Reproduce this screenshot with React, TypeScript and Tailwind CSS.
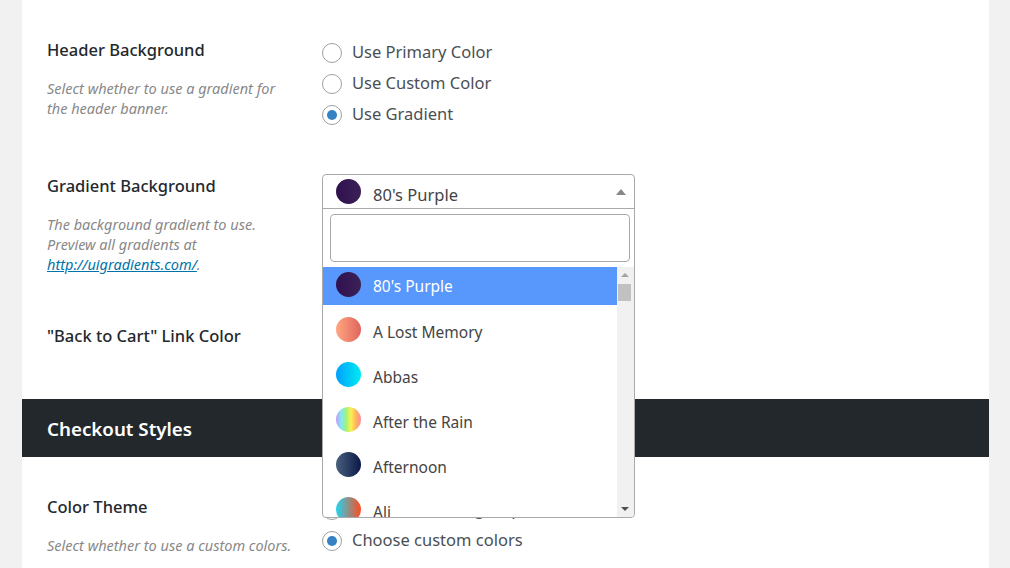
const font = "font-['Noto_Sans','Open_Sans',sans-serif]";

const gradients = [
  { name: "80's Purple", from: "#30114f", to: "#3b2056" },
  { name: "A Lost Memory", from: "#ffa781", to: "#e0645c" },
  { name: "Abbas", from: "#00a1ff", to: "#00ebf0" },
  { name: "After the Rain", from: "", to: "" },
  { name: "Afternoon", from: "#4a607c", to: "#0a1848" },
  { name: "Ali", from: "#22d4f0", to: "#ff4b1f" },
];

function Swatch({ item }: { item: (typeof gradients)[number] }) {
  if (item.name === "After the Rain") {
    return (
      <span className="h-[25px] w-[25px] shrink-0 rounded-full bg-[linear-gradient(to_right,#c09cf5,#7fe7fb,#9ff27e,#fdf04f,#ffb35c,#ff8a9e)]" />
    );
  }
  return (
    <span
      className="h-[25px] w-[25px] shrink-0 rounded-full"
      style={{ backgroundImage: `linear-gradient(to right, ${item.from}, ${item.to})` }}
    />
  );
}

function Radio({ label, checked }: { label: string; checked?: boolean }) {
  return (
    <label className="flex h-[31px] items-center gap-[10px] text-[16.5px] text-[#4a4f55]">
      <span className="flex h-5 w-5 items-center justify-center rounded-full border border-[#a0a0a0] bg-white">
        {checked && <span className="h-[10px] w-[10px] rounded-full bg-[#3582c4]" />}
      </span>
      {label}
    </label>
  );
}

function Row({
  title,
  hint,
  className,
  children,
}: {
  title: string;
  hint?: React.ReactNode;
  className?: string;
  children?: React.ReactNode;
}) {
  return (
    <div className={`flex px-[25px] ${className ?? ""}`}>
      <div className="w-[275px] shrink-0">
        <h3 className="pt-[1px] text-[16.5px] leading-[24px] font-medium text-[#23282d]">{title}</h3>
        {hint && (
          <p className="mt-[16px] w-[265px] text-[14.5px] leading-[20px] text-[#888] italic">{hint}</p>
        )}
      </div>
      <div>{children}</div>
    </div>
  );
}

function GradientDropdown() {
  return (
    <div className="absolute top-[174px] left-[322px] z-10 w-[313px] rounded-[4px] border border-[#aaa] bg-white">
      <div className="flex h-[34px] items-center border-b border-[#aaa] pl-[13px] text-[16.5px] text-[#444]">
        <Swatch item={gradients[0]} />
        <span className="ml-[12px] pt-[7px]">80's Purple</span>
        <span className="mt-[1px] mr-[8px] ml-auto h-0 w-0 border-x-[5px] border-b-[6px] border-x-transparent border-b-[#888]" />
      </div>
      <div className="py-[5px] pr-[4px] pl-[7px]">
        <div className="h-[48px] rounded-[4px] border border-[#aaa]" />
      </div>
      <div className="flex h-[250px] overflow-hidden rounded-b-[4px]">
        <ul className="min-w-0 flex-1 overflow-hidden text-[15.5px] text-[#444]">
          {gradients.map((item, i) => (
            <li
              key={item.name}
              className={`flex items-center pl-[13px] ${
                i === 0 ? "h-[38px] bg-[#5897fb] pb-[3px] text-white" : "h-[45px] pt-[4px]"
              }`}
            >
              <Swatch item={item} />
              <span className={`ml-[12px] ${i === 0 ? "pt-[5px]" : "pt-[7px]"}`}>{item.name}</span>
            </li>
          ))}
        </ul>
        <div className="relative w-[17px] shrink-0 bg-[#f1f1f1]">
          <span className="absolute top-[6px] left-[4px] h-0 w-0 border-x-[4px] border-b-[4px] border-x-transparent border-b-[#a3a3a3]" />
          <span className="absolute top-[17px] left-[1px] h-[17px] w-[13px] bg-[#c1c1c1]" />
          <span className="absolute bottom-[6px] left-[4px] h-0 w-0 border-x-[4px] border-t-[4px] border-x-transparent border-t-[#505050]" />
        </div>
      </div>
    </div>
  );
}

export default function App() {
  return (
    <div className={`h-[568px] overflow-hidden bg-[#f1f1f1] px-[21px] pl-[22px] ${font}`}>
      <div className="relative h-full bg-white">
        <div className="pt-[37px]">
          <Row
            title="Header Background"
            hint={
              <>
                Select whether to use a gradient for
                <br />
                the header banner.
              </>
            }
            className="h-[136px]"
          >
            <Radio label="Use Primary Color" />
            <Radio label="Use Custom Color" />
            <Radio label="Use Gradient" checked />
          </Row>
          <Row
            title="Gradient Background"
            hint={
              <>
                The background gradient to use.
                <br />
                Preview all gradients at
                <br />
                <a className="text-[#0073aa] underline">http://uigradients.com/</a>.
              </>
            }
            className="h-[150px]"
          />
          <Row title={'"Back to Cart" Link Color'} className="h-[76px]" />
        </div>
        <div className="flex h-[58px] items-center bg-[#23282d] px-[25px] pt-[2px] text-[18.75px] font-semibold text-white">
          Checkout Styles
        </div>
        <Row
          title="Color Theme"
          hint="Select whether to use a custom colors."
          className="pt-[37px]"
        >
          <Radio label="Use the default group" />
          <Radio label="Choose custom colors" checked />
        </Row>
      </div>
      <GradientDropdown />
    </div>
  );
}
